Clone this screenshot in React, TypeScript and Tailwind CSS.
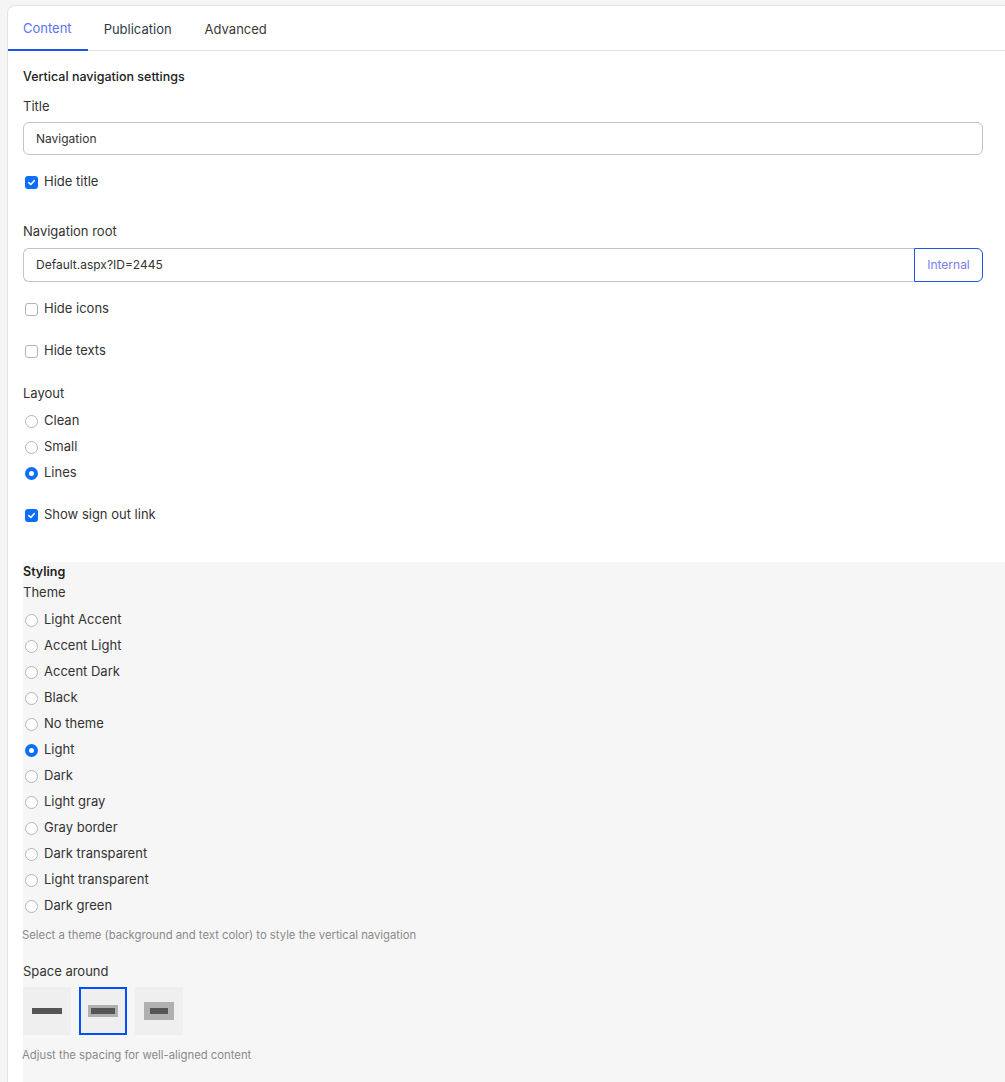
import React from 'react';

const font = { fontFamily: 'Inter, "Noto Sans", sans-serif' };

const Checkbox = ({ checked, label }: { checked?: boolean; label: string }) => (
  <label className="flex items-center gap-[5px] h-[20px] text-[13px] text-[#333]">
    {checked ? (
      <span className="ml-[2px] w-[13px] h-[13px] rounded-[3px] bg-[#0d6efd] flex items-center justify-center">
        <svg width="9" height="9" viewBox="0 0 10 10">
          <path d="M2 5.2 L4.2 7.2 L8 3" fill="none" stroke="white" strokeWidth="1.8" strokeLinecap="round" strokeLinejoin="round" />
        </svg>
      </span>
    ) : (
      <span className="ml-[2px] w-[13px] h-[13px] rounded-[3px] border border-[#b5b5b5] bg-white" />
    )}
    <span className="ml-[1px]">{label}</span>
  </label>
);

const Radio = ({ checked, label }: { checked?: boolean; label: string }) => (
  <label className="flex items-center gap-[5px] h-[26px] text-[13px] text-[#333]">
    {checked ? (
      <span className="ml-[2px] w-[13px] h-[13px] rounded-full border-[4px] border-[#0d6efd] bg-white" />
    ) : (
      <span className="ml-[2px] w-[13px] h-[13px] rounded-full border border-[#b5b5b5] bg-white" />
    )}
    <span className="ml-[1px]">{label}</span>
  </label>
);

const themes = [
  'Light Accent',
  'Accent Light',
  'Accent Dark',
  'Black',
  'No theme',
  'Light',
  'Dark',
  'Light gray',
  'Gray border',
  'Dark transparent',
  'Light transparent',
  'Dark green',
];

export default function App() {
  return (
    <div className="min-h-[1082px] bg-[#f5f5f5] pt-[5px] pl-[7px] overflow-hidden" style={font}>
      <div className="w-[1010px] bg-white border border-[#e4e4e4] border-r-0 rounded-tl-[8px] min-h-[1090px]">
        <div className="flex h-[45px] border-b border-[#dbe2ee]">
          <div className="pl-[15px] pr-[16px] pt-[3px] flex items-center text-[13px] text-[#5b73f5] border-b-2 border-[#1a56e8] -mb-[1px]">Content</div>
          <div className="px-[16px] pt-[3px] flex items-center text-[13px] text-[#2f3a48]">Publication</div>
          <div className="px-[17px] pt-[3px] flex items-center text-[13px] text-[#3a3a3a]">Advanced</div>
        </div>
        <div className="pl-[15px] pr-[34px] pt-[16px]">
          <div className="text-[12.5px] font-medium text-[#222] h-[20px] leading-[20px]">Vertical navigation settings</div>
          <div className="mt-[9px] text-[13px] text-[#333] h-[20px] leading-[20px]">Title</div>
          <div className="mt-[6px] h-[33px] border border-[#c4c4c4] rounded-[6px] flex items-center px-[12px] text-[12px] text-[#333]">
            Navigation
          </div>
          <div className="mt-[17px]">
            <Checkbox checked label="Hide title" />
          </div>
          <div className="mt-[29px] text-[13px] text-[#333] h-[20px] leading-[20px]">Navigation root</div>
          <div className="mt-[7px] flex h-[34px]">
            <div className="flex-1 border border-[#c4c4c4] border-r-0 rounded-l-[6px] flex items-center px-[12px] text-[12px] text-[#333]">
              Default.aspx?ID=2445
            </div>
            <div className="w-[69px] border border-[#1a56e8] rounded-r-[6px] flex items-center justify-center text-[12px] text-[#7a7cf0]">
              Internal
            </div>
          </div>
          <div className="mt-[17px]">
            <Checkbox label="Hide icons" />
          </div>
          <div className="mt-[22px]">
            <Checkbox label="Hide texts" />
          </div>
          <div className="mt-[22px] text-[13px] text-[#333] h-[20px] leading-[20px]">Layout</div>
          <div className="mt-[5px]">
            <Radio label="Clean" />
            <Radio label="Small" />
            <Radio checked label="Lines" />
          </div>
          <div className="mt-[19px]">
            <Checkbox checked label="Show sign out link" />
          </div>
        </div>
        <div className="ml-[15px] mt-[37px] bg-[#f6f6f6] pb-[40px]">
          <div className="pt-[1px] text-[12.5px] font-semibold text-[#222] h-[18px] leading-[18px]">Styling</div>
          <div className="mt-[2px] text-[13px] text-[#333] h-[20px] leading-[20px]">Theme</div>
          <div className="mt-[5px]">
            {themes.map((t) => (
              <Radio key={t} label={t} checked={t === 'Light'} />
            ))}
          </div>
          <div className="mt-[7px] text-[11.3px] text-[#8a8a8a] h-[18px] leading-[18px] -ml-[1px]">
            Select a theme (background and text color) to style the vertical navigation
          </div>
          <div className="mt-[17px] text-[13px] text-[#333] h-[20px] leading-[20px]">Space around</div>
          <div className="mt-[6px] flex gap-[8px]">
            <div className="w-[48px] h-[48px] bg-[#efefef] flex items-center justify-center">
              <div className="w-[30px] h-[6px] bg-[#555]" />
            </div>
            <div className="w-[48px] h-[48px] bg-[#efefef] border-2 border-[#0050ff] flex items-center justify-center">
              <div className="w-[30px] h-[12px] bg-[#b0b0b0] flex items-center justify-center">
                <div className="w-[24px] h-[6px] bg-[#555]" />
              </div>
            </div>
            <div className="w-[48px] h-[48px] bg-[#efefef] flex items-center justify-center">
              <div className="w-[30px] h-[18px] bg-[#b0b0b0] flex items-center justify-center">
                <div className="w-[18px] h-[6px] bg-[#555]" />
              </div>
            </div>
          </div>
          <div className="mt-[11px] text-[11.3px] text-[#8a8a8a] h-[18px] leading-[18px] -ml-[1px]">
            Adjust the spacing for well-aligned content
          </div>
        </div>
      </div>
    </div>
  );
}
